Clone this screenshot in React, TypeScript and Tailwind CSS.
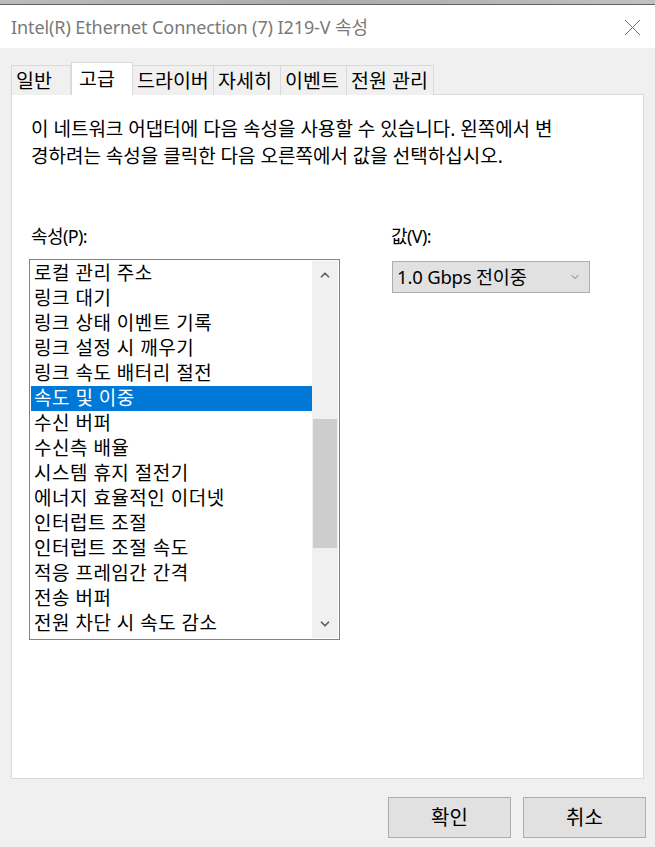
import { ChevronDown, ChevronUp } from "lucide-react";

const FONT = "font-['Noto_Sans','Noto_Sans_CJK_KR',sans-serif]";

const TABS = ["일반", "고급", "드라이버", "자세히", "이벤트", "전원 관리"];
const TAB_W = [60, 62, 81, 67, 66, 87];

const PROPS = [
  "로컬 관리 주소",
  "링크 대기",
  "링크 상태 이벤트 기록",
  "링크 설정 시 깨우기",
  "링크 속도 배터리 절전",
  "속도 및 이중",
  "수신 버퍼",
  "수신측 배율",
  "시스템 휴지 절전기",
  "에너지 효율적인 이더넷",
  "인터럽트 조절",
  "인터럽트 조절 속도",
  "적응 프레임간 간격",
  "전송 버퍼",
  "전원 차단 시 속도 감소",
];

function CloseIcon() {
  return (
    <svg width="17" height="17" viewBox="0 0 17 17" className="mr-[14px]">
      <path d="M1 1L16 16M16 1L1 16" stroke="#6f6f6f" strokeWidth="1" fill="none" />
    </svg>
  );
}

export default function App() {
  return (
    <div className={`${FONT} w-[655px] h-[847px] bg-[#f0f0f0] flex flex-col overflow-hidden`}>
      <div className="h-[5px] shrink-0 bg-gradient-to-r from-[#b9bcbe] via-[#a9adb0] to-[#c4c0bd] border-b border-[#5f6366]" />

      <div className="h-[43px] shrink-0 bg-white flex items-center justify-between pl-[11px] pt-[2px]">
        <span className="text-[18px] text-[#797979] tracking-[-0.1px]">
          Intel(R) Ethernet Connection (7) I219-V 속성
        </span>
        <CloseIcon />
      </div>

      <div className="flex flex-col px-[11px] pt-[14px]">
        <div className="flex items-end h-[33px] relative z-10 -mb-px">
          {TABS.map((t, i) =>
            i === 1 ? (
              <div
                key={t}
                style={{ width: TAB_W[i] }}
                className="h-[33px] bg-white border border-b-0 border-[#d9d9d9] flex items-center pl-[7px] text-[19.5px] text-black"
              >
                {t}
              </div>
            ) : (
              <div
                key={t}
                style={{ width: TAB_W[i] }}
                className="h-[30px] bg-[#f0f0f0] border border-b-0 border-l-0 first:border-l border-[#d9d9d9] flex items-center pl-[4px] text-[19.5px] text-black whitespace-nowrap"
              >
                {t}
              </div>
            )
          )}
        </div>

        <div className="h-[685px] bg-white border border-[#d9d9d9] flex flex-col px-[17px] pt-[21px]">
          <div className="pl-[2px] text-[19px] leading-[27px] text-black whitespace-nowrap">
            <div>이 네트워크 어댑터에 다음 속성을 사용할 수 있습니다. 왼쪽에서 변</div>
            <div>경하려는 속성을 클릭한 다음 오른쪽에서 값을 선택하십시오.</div>
          </div>

          <div className="flex mt-[54px]">
            <div className="w-[362px] flex flex-col">
              <div className="pl-[2px] h-[24px] flex items-center text-[18px] tracking-[-0.6px]">속성(P):</div>
              <div className="mt-[11px] w-[311px] h-[381px] border border-[#828282] flex p-px">
                <div className="flex-1 flex flex-col">
                  {PROPS.map((p) => (
                    <div
                      key={p}
                      className={`h-[25px] flex items-center pl-[3px] text-[19px] tracking-[0.5px] ${
                        p === "속도 및 이중" ? "bg-[#0078d7] text-white" : "text-black"
                      }`}
                    >
                      {p}
                    </div>
                  ))}
                </div>
                <div className="w-[26px] bg-[#f0f0f0] flex flex-col items-center">
                  <div className="h-[28px] flex items-center justify-center">
                    <ChevronUp size={14} strokeWidth={3} color="#606060" />
                  </div>
                  <div className="h-[129px] w-[24px] bg-[#cdcdcd] mt-[130px]" />
                  <div className="flex-1" />
                  <div className="h-[28px] flex items-center justify-center">
                    <ChevronDown size={14} strokeWidth={3} color="#606060" />
                  </div>
                </div>
              </div>
            </div>

            <div className="flex flex-col">
              <div className="h-[24px] flex items-center text-[18px] tracking-[-0.6px]">값(V):</div>
              <div className="mt-[13px] ml-px w-[198px] h-[32px] bg-[#e1e1e1] border border-[#adadad] flex items-center justify-between pl-[4px] pr-[8px]">
                <span className="text-[18.5px] tracking-[-0.2px]">1.0 Gbps 전이중</span>
                <ChevronDown size={12} strokeWidth={1.5} color="#555" />
              </div>
            </div>
          </div>
        </div>

        <div className="flex justify-end gap-[12px] mt-[18px] mr-[-2px]">
          <button className="w-[123px] h-[41px] bg-[#e1e1e1] border border-[#adadad] text-[20px] text-black">확인</button>
          <button className="w-[123px] h-[41px] bg-[#e1e1e1] border border-[#adadad] text-[20px] text-black">취소</button>
        </div>
      </div>
    </div>
  );
}
